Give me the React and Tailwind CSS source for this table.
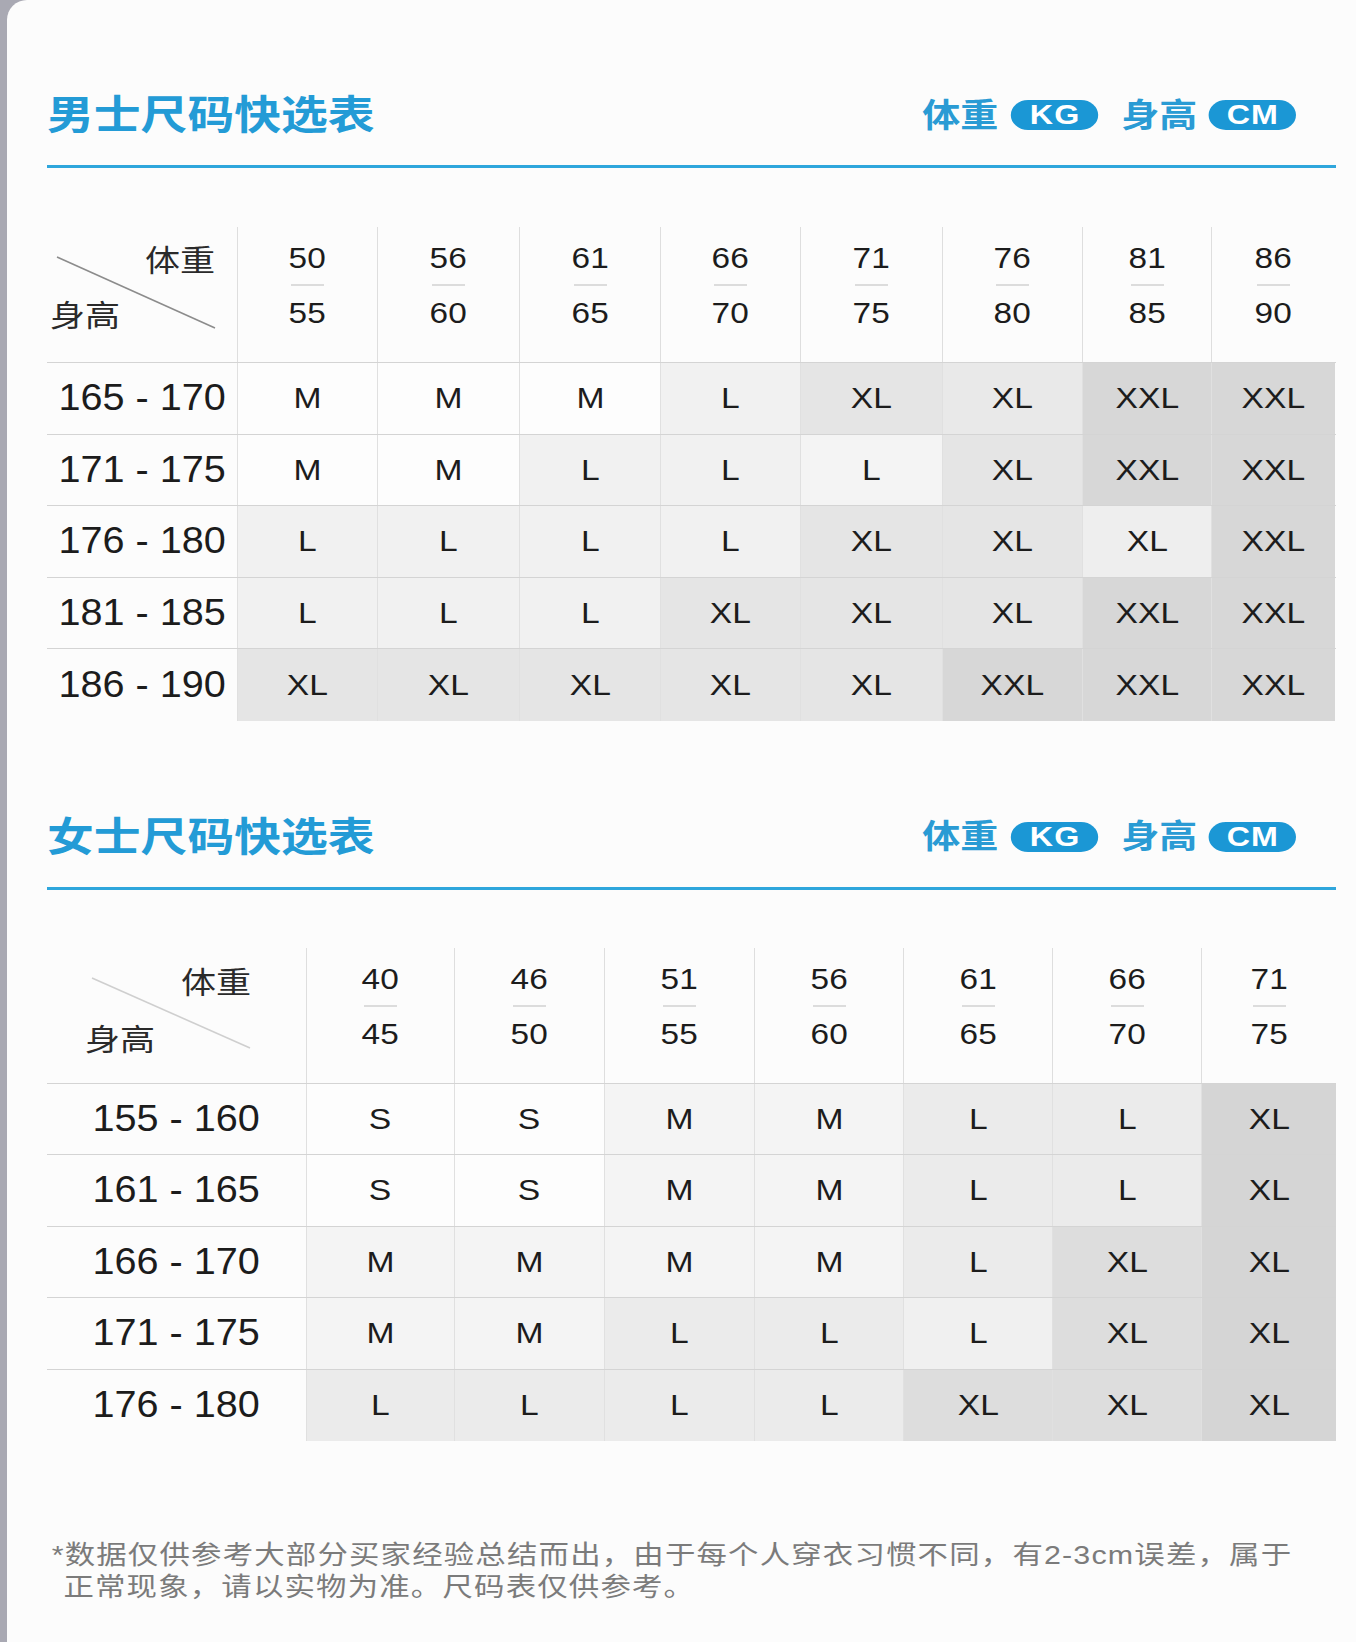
import React from 'react';

const FONT = "font-['Liberation_Sans','Noto_Sans_CJK_SC',sans-serif]";

const MEN = {
  title: '男士尺码快选表',
  cols: 'grid-cols-[190px_140px_142px_141px_140px_142px_140px_129px_124px]',
  weights: [['50', '55'], ['56', '60'], ['61', '65'], ['66', '70'], ['71', '75'], ['76', '80'], ['81', '85'], ['86', '90']],
  rows: [
    ['165 - 170', ['M', 'M', 'M', 'L', 'XL', 'XL', 'XXL', 'XXL']],
    ['171 - 175', ['M', 'M', 'L', 'L', 'L', 'XL', 'XXL', 'XXL']],
    ['176 - 180', ['L', 'L', 'L', 'L', 'XL', 'XL', 'XL', 'XXL']],
    ['181 - 185', ['L', 'L', 'L', 'XL', 'XL', 'XL', 'XXL', 'XXL']],
    ['186 - 190', ['XL', 'XL', 'XL', 'XL', 'XL', 'XXL', 'XXL', 'XXL']],
  ],
  shade: { M: 'bg-[#fdfdfd]', L: 'bg-[#f1f1f1]', XL: 'bg-[#e5e5e5]', XXL: 'bg-[#d7d7d7]' },
  // odd cells that are lighter than the rest of their size
  override: { '2-6': 'bg-[#eeeeee]', '1-4': 'bg-[#f4f4f4]', '0-5': 'bg-[#e9e9e9]' },
  diag: { line: [10, 30, 168, 101], stroke: '#8c8c8c', top: 'ml-[98px] mt-[19px]', bottom: 'ml-[3px] mt-[25px]' },
};

const WOMEN = {
  title: '女士尺码快选表',
  cols: 'grid-cols-[259px_148px_150px_150px_149px_149px_149px_135px]',
  weights: [['40', '45'], ['46', '50'], ['51', '55'], ['56', '60'], ['61', '65'], ['66', '70'], ['71', '75']],
  rows: [
    ['155 - 160', ['S', 'S', 'M', 'M', 'L', 'L', 'XL']],
    ['161 - 165', ['S', 'S', 'M', 'M', 'L', 'L', 'XL']],
    ['166 - 170', ['M', 'M', 'M', 'M', 'L', 'XL', 'XL']],
    ['171 - 175', ['M', 'M', 'L', 'L', 'L', 'XL', 'XL']],
    ['176 - 180', ['L', 'L', 'L', 'L', 'XL', 'XL', 'XL']],
  ],
  shade: { S: 'bg-[#fdfdfd]', M: 'bg-[#f4f4f4]', L: 'bg-[#ebebeb]', XL: 'bg-[#dddddd]' },
  override: {
    '0-6': 'bg-[#d5d5d5]', '1-6': 'bg-[#d5d5d5]', '2-6': 'bg-[#d5d5d5]', '3-6': 'bg-[#d5d5d5]', '4-6': 'bg-[#d5d5d5]',
    '3-4': 'bg-[#f0f0f0]',
  },
  diag: { line: [45, 30, 203, 100], stroke: '#cfcfcf', top: 'ml-[134px] mt-[20px]', bottom: 'ml-[38px] mt-[27px]' },
};

function Pill({ children }) {
  return (
    <span className="flex h-[30px] w-[76px] items-center justify-center rounded-full bg-[#1b97d5] pl-[1px] text-[28px] font-bold leading-none tracking-[1px] text-white">
      {children}
    </span>
  );
}

function SectionHead({ title }) {
  return (
    <>
      <div className="flex h-[50px] items-center justify-between pr-[40px]">
        <h2 className="origin-left scale-x-[1.17] text-[40px] font-bold leading-none text-[#239bd6]">{title}</h2>
        {/* the artwork is stretched sideways, so the unit legend is too */}
        <div className="flex origin-right scale-x-[1.15] items-center text-[#2a9bd4]">
          <span className="text-[33px] font-bold leading-none">体重</span>
          <span className="ml-[11px]"><Pill>KG</Pill></span>
          <span className="ml-[20px] text-[33px] font-bold leading-none">身高</span>
          <span className="ml-[10px]"><Pill>CM</Pill></span>
        </div>
      </div>
      <div className="mt-[25px] h-[3px] bg-[#2fa6dc]" />
    </>
  );
}

function DiagCell({ diag }) {
  const [x1, y1, x2, y2] = diag.line;
  return (
    <div className="relative flex flex-col items-start text-[30px] leading-[30px] text-[#2a2a2a]">
      <svg className="absolute inset-0 h-full w-full" aria-hidden="true">
        <line x1={x1} y1={y1} x2={x2} y2={y2} stroke={diag.stroke} strokeWidth="1.6" />
      </svg>
      <span className={`relative origin-left scale-x-[1.17] ${diag.top}`}>体重</span>
      <span className={`relative origin-left scale-x-[1.17] ${diag.bottom}`}>身高</span>
    </div>
  );
}

function SizeTable({ data }) {
  return (
    <div className="text-[#1c1c1c]">
      {/* weight header */}
      <div className={`grid h-[136px] border-b border-[#d4d4d4] ${data.cols}`}>
        <DiagCell diag={data.diag} />
        {data.weights.map(([a, b]) => (
          <div key={a} className="flex flex-col items-center border-l border-[#dedede] pt-[17px]">
            <span className="scale-x-[1.15] text-[29px] leading-[28px]">{a}</span>
            <span className="mt-[12px] h-[2px] w-[33px] bg-[#dcdcdc]" />
            <span className="mt-[13px] scale-x-[1.15] text-[29px] leading-[28px]">{b}</span>
          </div>
        ))}
      </div>

      {/* height rows */}
      {data.rows.map(([label, sizes], r) => (
        <div
          key={label}
          className={`grid h-[71.5px] ${data.cols} ${r < data.rows.length - 1 ? 'border-b border-[#d4d4d4]' : ''}`}
        >
          <div className="flex items-center justify-center text-[36px] leading-none">
            <span className="scale-x-[1.1]">{label}</span>
          </div>
          {sizes.map((s, c) => (
            <div
              key={c}
              className={`flex items-center justify-center border-l border-[#e0e0e0] text-[30px] leading-none ${data.override[`${r}-${c}`] || data.shade[s]}`}
            >
              <span className="scale-x-[1.12]">{s}</span>
            </div>
          ))}
        </div>
      ))}
    </div>
  );
}

export default function App() {
  return (
    <div className={`flex h-[1642px] w-[1356px] overflow-hidden bg-[#a9a9b3] ${FONT}`}>
      <div className="ml-[7px] flex-1 rounded-tl-[20px] bg-[#fcfcfc] pl-[40px] pr-[20px] pt-[90px]">
        <SectionHead title={MEN.title} />
        <div className="mt-[59px]">
          <SizeTable data={MEN} />
        </div>

        <div className="mt-[91px]">
          <SectionHead title={WOMEN.title} />
        </div>
        <div className="mt-[58px]">
          <SizeTable data={WOMEN} />
        </div>

        {/* footnote */}
        <div className="mt-[98px] origin-left scale-x-[1.17] whitespace-nowrap text-[26px] leading-[32px] tracking-[1px] text-[#7b7b7b]">
          <p className="pl-[4px]">*数据仅供参考大部分买家经验总结而出，由于每个人穿衣习惯不同，有2-3cm误差，属于</p>
          <p className="pl-[14px]">正常现象，请以实物为准。尺码表仅供参考。</p>
        </div>
      </div>
    </div>
  );
}
